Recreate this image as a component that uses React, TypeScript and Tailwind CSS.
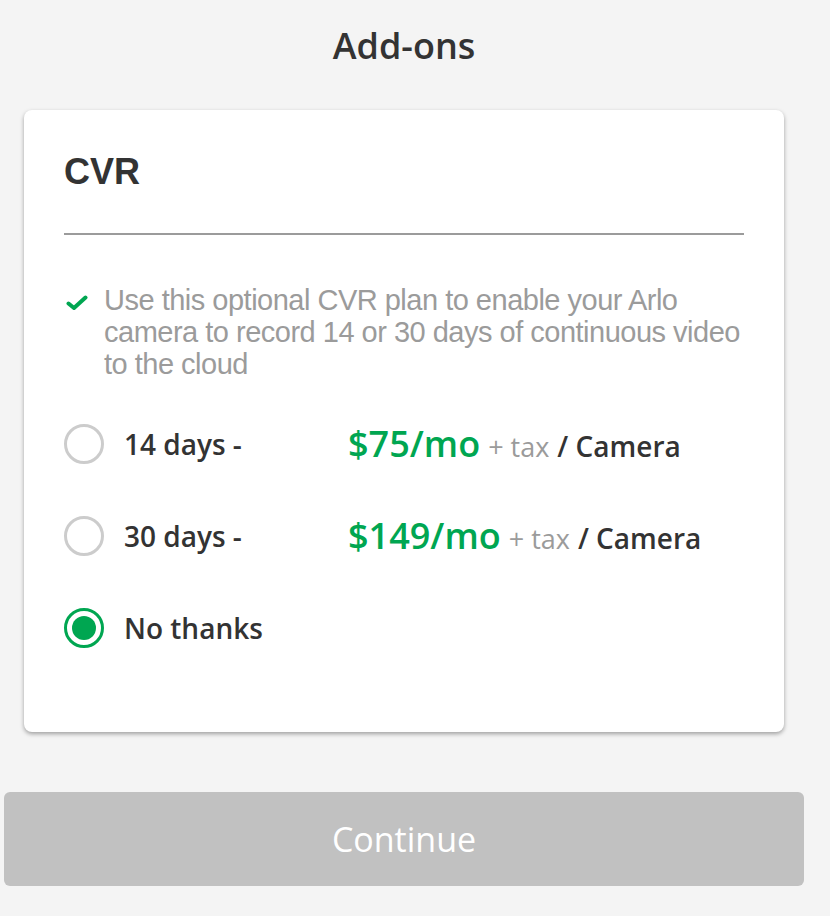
import { useState } from 'react'

type Plan = {
  id: string
  label: string
  price?: string
}

const plans: Plan[] = [
  { id: '14', label: '14 days -', price: '$75/mo' },
  { id: '30', label: '30 days -', price: '$149/mo' },
  { id: 'none', label: 'No thanks' },
]

function Radio({ checked }: { checked: boolean }) {
  if (checked) {
    return (
      <span className="flex h-[40px] w-[40px] shrink-0 items-center justify-center rounded-full border-[3px] border-[#00a651]">
        <span className="h-[24px] w-[24px] rounded-full bg-[#00a651]" />
      </span>
    )
  }
  return <span className="h-[40px] w-[40px] shrink-0 rounded-full border-[3px] border-[#cccccc]" />
}

export default function App() {
  const [selected, setSelected] = useState('none')

  return (
    <div className="min-h-[916px] w-full bg-[#f4f4f4] font-['Open_Sans',sans-serif]">
      <div className="flex w-[808px] flex-col">
        <h1 className="pt-[22px] text-center text-[36px] font-semibold leading-[48px] text-[#333333]">Add-ons</h1>

        <div className="mx-6 mt-[40px] rounded-[8px] bg-white px-10 pb-[84px] pt-[40px] shadow-[0_2px_4px_rgba(0,0,0,0.35)]">
          <h2 className="font-['Liberation_Sans',Arial,sans-serif] text-[36px] font-bold leading-[44px] text-[#333333]">CVR</h2>
          <div className="mt-[39px] h-[2px] bg-[#9b9b9b]" />

          <div className="mt-[49px] flex items-start gap-[16px] pl-[2px]">
            <svg viewBox="0 0 22 16" className="mt-[10px] h-[17px] w-[22px] shrink-0">
              <path d="M2.5 9 L8 13.5 L19.5 3" fill="none" stroke="#00a651" strokeWidth="4" strokeLinecap="round" strokeLinejoin="round" />
            </svg>
            <p className="font-['Liberation_Sans',Arial,sans-serif] text-[29px] leading-[32px] tracking-[-0.5px] text-[#9b9b9b]">
              Use this optional CVR plan to enable your Arlo camera to record 14 or 30 days of continuous video to the cloud
            </p>
          </div>

          <div className="mt-[44px] flex flex-col gap-[52px]">
            {plans.map((p) => (
              <button
                key={p.id}
                onClick={() => setSelected(p.id)}
                className="flex h-[40px] items-center text-left"
              >
                <Radio checked={selected === p.id} />
                <span className="ml-[20px] w-[224px] text-[28px] font-semibold leading-[40px] text-[#333333]">{p.label}</span>
                {p.price && (
                  <span className="flex items-baseline gap-[8px] whitespace-nowrap">
                    <span className="text-[36px] font-semibold text-[#00a651]">{p.price}</span>
                    <span className="text-[27px] text-[#9b9b9b]">+ tax</span>
                    <span className="text-[28px] font-semibold text-[#333333]">/ Camera</span>
                  </span>
                )}
              </button>
            ))}
          </div>
        </div>

        <button className="mx-1 mt-[60px] h-[94px] rounded-[6px] bg-[#c1c1c1] text-[34px] text-white">Continue</button>
      </div>
    </div>
  )
}
